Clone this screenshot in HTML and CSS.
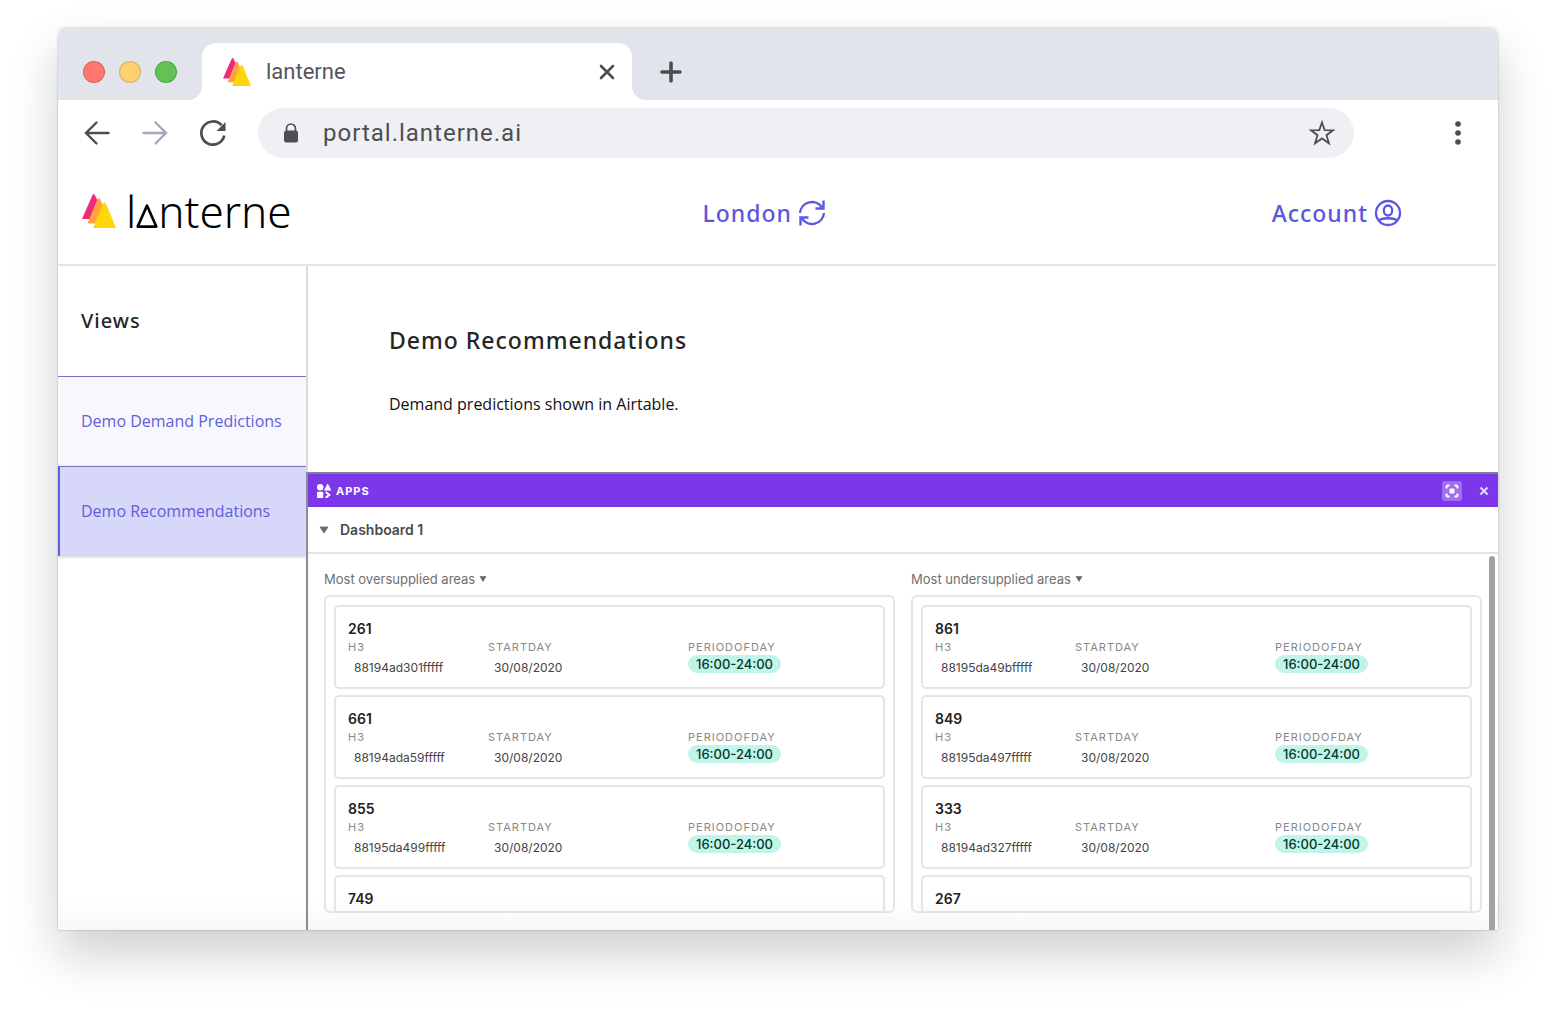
FILE: index.html
```
<!DOCTYPE html>
<html lang="en">
<head>
  <meta charset="utf-8">
  <title>lanterne</title>
  <link rel="stylesheet" href="styles.css">
</head>
<body>

  <div class="browser">
    <div class="tab-strip">
      <div class="window-controls">
        <button class="dot red" aria-label="Close window"></button>
        <button class="dot yellow" aria-label="Minimise window"></button>
        <button class="dot green" aria-label="Maximise window"></button>
      </div>
      <div class="tab-holder">
        <div class="tab">
          <svg class="favicon" viewBox="0 0 34 34">
            <path d="M0 25 10.500 1Q11.500-.8 12.800 1L17 10 10 25Z" fill="#ec297b"/>
            <path d="M5.500 29.500 15.500 5Q16.600 3.500 18 5L21 12 15 29.500Z" fill="#ffa340"/>
            <path d="M11 34 21 9.500Q22.500 7.500 24 9.500L34 34Z" fill="#ffd60a"/>
          </svg>
          <span class="tab-title">lanterne</span>
          <button class="icon-button" aria-label="Close tab">
            <svg width="16" height="16" viewBox="0 0 16 16"><path d="M2 2 14 14M14 2 2 14" fill="none" stroke="#4d4e53" stroke-width="2.600" stroke-linecap="round"/></svg>
          </button>
        </div>
      </div>
      <div class="strip-rest">
        <button class="icon-button" aria-label="New tab">
          <svg width="22" height="22" viewBox="0 0 22 22"><path d="M11 2V20M2 11H20" fill="none" stroke="#4d4e53" stroke-width="3.600" stroke-linecap="round"/></svg>
        </button>
      </div>
    </div>

    <div class="toolbar">
      <button class="icon-button" aria-label="Back">
        <svg width="26" height="26" viewBox="0 0 26 26"><path d="M24.500 13H2M12.500 2.500 2 13 12.500 23.500" fill="none" stroke="#4d4e53" stroke-width="2.400" stroke-linecap="round"/></svg>
      </button>
      <button class="icon-button" aria-label="Forward">
        <svg width="26" height="26" viewBox="0 0 26 26"><path d="M1.500 13H24M13.500 2.500 24 13 13.500 23.500" fill="none" stroke="#a5a8b5" stroke-width="2.400" stroke-linecap="round"/></svg>
      </button>
      <button class="icon-button" aria-label="Reload">
        <svg width="26" height="26" viewBox="0 0 26 26"><path d="M24.300 15.500A11.600 11.600 0 1 1 21.500 5.200" fill="none" stroke="#4d4e53" stroke-width="2.700"/><path d="M25.500 2V11H16.500Z" fill="#4d4e53"/></svg>
      </button>
      <div class="address-bar">
        <svg width="16" height="20" viewBox="0 0 16 20"><path d="M3.500 9V5.500A4.500 4.500 0 0 1 12.500 5.500V9" fill="none" stroke="#4d4e53" stroke-width="1.700"/><rect x="1" y="7.500" width="14" height="12" rx="2.500" fill="#4d4e53"/></svg>
        <input type="text" class="address" aria-label="Address" value="portal.lanterne.ai">
        <button class="icon-button" aria-label="Bookmark">
          <svg width="26" height="26" viewBox="0 0 26 26"><path d="M13 2.500 15.700 10.100 24 10.300 17.500 15.200 19.900 23.200 13 18.400 6.100 23.200 8.500 15.200 2 10.300 10.300 10.100Z" fill="none" stroke="#4d4e53" stroke-width="1.800"/></svg>
        </button>
      </div>
      <button class="icon-button more" aria-label="Menu">
        <svg width="6" height="24" viewBox="0 0 6 24" fill="#4d4e53"><circle cx="3" cy="3" r="2.800"/><circle cx="3" cy="12" r="2.800"/><circle cx="3" cy="21" r="2.800"/></svg>
      </button>
    </div>

    <header class="site-header">
      <a class="logo" href="#">
        <svg class="logo-mark" viewBox="0 0 34 34">
          <path d="M0 25 10.500 1Q11.500-.8 12.800 1L17 10 10 25Z" fill="#ec297b"/>
          <path d="M5.500 29.500 15.500 5Q16.600 3.500 18 5L21 12 15 29.500Z" fill="#ffa340"/>
          <path d="M11 34 21 9.500Q22.500 7.500 24 9.500L34 34Z" fill="#ffd60a"/>
        </svg>
        <span class="logo-text">l<svg class="logo-a" viewBox="0 0 20 22"><path d="M1.500 20.700 10 1.500 18.500 20.700Z" fill="none" stroke="#000" stroke-width="2.400" stroke-linejoin="round"/></svg>nterne</span>
      </a>
      <a class="header-link" href="#">London
        <svg width="28" height="28" viewBox="0 0 28 28" fill="none" stroke="#5b57e0" stroke-width="2.400"><path d="M2 14A12 12 0 0 1 24 8.500M26 14A12 12 0 0 1 4 19.500"/><path d="M25.500 1.500V9.500H17.500M2.500 26.500V18.500H10.500"/></svg>
      </a>
      <a class="header-link" href="#">Account
        <svg width="28" height="28" viewBox="0 0 28 28" fill="none" stroke="#5b57e0" stroke-width="2.300"><circle cx="14" cy="14" r="12"/><ellipse cx="14" cy="11.500" rx="4.200" ry="5"/><path d="M5 21.500C8 18.500 20 18.500 23 21.500"/></svg>
      </a>
    </header>

    <div class="page">
      <nav class="sidebar">
        <h2>Views</h2>
        <a href="#">Demo Demand Predictions</a>
        <a href="#" class="active">Demo Recommendations</a>
      </nav>

      <main class="content">
        <div class="intro">
          <h1>Demo Recommendations</h1>
          <p>Demand predictions shown in Airtable.</p>
        </div>

        <section class="airtable">
          <div class="apps-bar">
            <svg width="14" height="14" viewBox="0 0 14 14" fill="#fff"><circle cx="3.200" cy="3.200" r="3.200"/><path d="M10.700 0 14 6.200H7.400Z" stroke="#fff" stroke-width=".6"/><rect y="7.800" width="6.300" height="6.200" rx="1"/><path d="M8.700 8 12.300 10.900 8.700 13.700" fill="none" stroke="#fff" stroke-width="2"/></svg>
            <span class="apps-title">APPS</span>
            <button class="fullscreen" aria-label="Full screen">
              <svg width="14" height="14" viewBox="0 0 14 14"><path d="M1.500 4.500V3Q1.500 1.500 3 1.500H4.500M9.500 1.500H11Q12.500 1.500 12.500 3V4.500M12.500 9.500V11Q12.500 12.500 11 12.500H9.500M4.500 12.500H3Q1.500 12.500 1.500 11V9.500" fill="none" stroke="#fff" stroke-width="2"/><rect x="4.500" y="4.500" width="5" height="5" rx="1" fill="#fff"/></svg>
            </button>
            <button class="icon-button" aria-label="Close apps">
              <svg width="10" height="10" viewBox="0 0 10 10"><path d="M1.500 1.500 8.500 8.500M8.500 1.500 1.500 8.500" stroke="#e6dafc" stroke-width="2"/></svg>
            </button>
          </div>
          <button class="dashboard-name">
            <svg width="10" height="8" viewBox="0 0 10 8"><path d="M1 1H9L5 7Z" fill="#6b6b6b" stroke="#6b6b6b" stroke-width=".8"/></svg>
            Dashboard 1
          </button>

          <div class="dashboard">
            <div class="block">
              <button class="block-title">Most oversupplied areas
                <svg width="8" height="6" viewBox="0 0 8 6"><path d="M1 .5H7L4 5.500Z" fill="#666" stroke="#666" stroke-width=".6"/></svg>
              </button>
              <div class="record-list">
                <article class="record">
                  <h3>261</h3>
                  <dl>
                    <div><dt>H3</dt><dd>88194ad301fffff</dd></div>
                    <div><dt>STARTDAY</dt><dd>30/08/2020</dd></div>
                    <div><dt>PERIODOFDAY</dt><dd class="pill">16:00-24:00</dd></div>
                  </dl>
                </article>
                <article class="record">
                  <h3>661</h3>
                  <dl>
                    <div><dt>H3</dt><dd>88194ada59fffff</dd></div>
                    <div><dt>STARTDAY</dt><dd>30/08/2020</dd></div>
                    <div><dt>PERIODOFDAY</dt><dd class="pill">16:00-24:00</dd></div>
                  </dl>
                </article>
                <article class="record">
                  <h3>855</h3>
                  <dl>
                    <div><dt>H3</dt><dd>88195da499fffff</dd></div>
                    <div><dt>STARTDAY</dt><dd>30/08/2020</dd></div>
                    <div><dt>PERIODOFDAY</dt><dd class="pill">16:00-24:00</dd></div>
                  </dl>
                </article>
                <article class="record">
                  <h3>749</h3>
                </article>
              </div>
            </div>

            <div class="block">
              <button class="block-title">Most undersupplied areas
                <svg width="8" height="6" viewBox="0 0 8 6"><path d="M1 .5H7L4 5.500Z" fill="#666" stroke="#666" stroke-width=".6"/></svg>
              </button>
              <div class="record-list">
                <article class="record">
                  <h3>861</h3>
                  <dl>
                    <div><dt>H3</dt><dd>88195da49bfffff</dd></div>
                    <div><dt>STARTDAY</dt><dd>30/08/2020</dd></div>
                    <div><dt>PERIODOFDAY</dt><dd class="pill">16:00-24:00</dd></div>
                  </dl>
                </article>
                <article class="record">
                  <h3>849</h3>
                  <dl>
                    <div><dt>H3</dt><dd>88195da497fffff</dd></div>
                    <div><dt>STARTDAY</dt><dd>30/08/2020</dd></div>
                    <div><dt>PERIODOFDAY</dt><dd class="pill">16:00-24:00</dd></div>
                  </dl>
                </article>
                <article class="record">
                  <h3>333</h3>
                  <dl>
                    <div><dt>H3</dt><dd>88194ad327fffff</dd></div>
                    <div><dt>STARTDAY</dt><dd>30/08/2020</dd></div>
                    <div><dt>PERIODOFDAY</dt><dd class="pill">16:00-24:00</dd></div>
                  </dl>
                </article>
                <article class="record">
                  <h3>267</h3>
                </article>
              </div>
            </div>
            <div class="scrollbar"></div>
          </div>
        </section>
      </main>
    </div>
  </div>

</body>
</html>
```
FILE: styles.css
```
* {
  box-sizing: border-box;
}

body {
  margin: 0;
  height: 100vh;
  padding: 28px 58px 87px;
  background: #fff;
  font-family: "Noto Sans", sans-serif;
}

h1, h2, h3, p, dl, dd {
  margin: 0;
}

button {
  border: none;
  background: none;
  padding: 0;
  font: inherit;
  cursor: pointer;
}

a {
  text-decoration: none;
}

svg {
  display: block;
  flex: none;
}

.browser {
  height: 100%;
  display: flex;
  flex-direction: column;
  overflow: hidden;
  border-radius: 8px 8px 0 0;
  background: linear-gradient(to top, #f7f7f7, #fff 32px);
  box-shadow: 0 24px 50px rgba(10, 15, 20, 0.2), 0 0 2px rgba(0, 0, 0, 0.3);
}

/* tabs */
.tab-strip {
  display: flex;
  height: 72px;
  flex: none;
  background: #fff;
}

.window-controls {
  display: flex;
  align-items: center;
  gap: 14px;
  width: 144px;
  padding: 16px 0 0 25px;
  background: #e1e4eb;
  border-bottom-right-radius: 14px;
}

.dot {
  width: 22px;
  height: 22px;
  border-radius: 50%;
  border: 1px solid rgba(0, 0, 0, 0.15);
}

.red { background: #ff776d; }
.yellow { background: #ffd06f; }
.green { background: #62c254; }

.tab-holder {
  width: 430px;
  padding-top: 15px;
  background: linear-gradient(#e1e4eb 50%, #fff 50%);
}

.tab {
  display: flex;
  align-items: center;
  height: 57px;
  padding: 0 17px 0 21px;
  background: #fff;
  border-radius: 14px 14px 0 0;
}

.favicon {
  width: 28px;
  height: 28px;
}

.tab-title {
  flex: 1;
  margin-left: 15px;
  font-family: Roboto, sans-serif;
  font-size: 22px;
  color: #55565b;
}

.strip-rest {
  flex: 1;
  display: flex;
  align-items: center;
  padding: 16px 0 0 28px;
  background: #e1e4eb;
  border-bottom-left-radius: 14px;
}

/* address row */
.toolbar {
  display: flex;
  align-items: center;
  flex: none;
  gap: 32px;
  height: 65px;
  padding: 0 37px 0 26px;
}

.address-bar {
  flex: 1;
  display: flex;
  align-items: center;
  height: 50px;
  padding: 0 19px 0 25px;
  border-radius: 25px;
  background: #eff0f4;
}

.address {
  flex: 1;
  min-width: 0;
  margin-left: 24px;
  padding: 0;
  border: none;
  background: none;
  font-family: Roboto, sans-serif;
  font-size: 24px;
  letter-spacing: 1px;
  color: #4d4e53;
}

.more {
  margin-left: 69px;
}

/* site header */
.site-header {
  display: grid;
  grid-template-columns: 47% 1fr auto;
  align-items: center;
  flex: none;
  height: 101px;
  margin-right: 2px;
  padding: 0 94px 4px 24px;
  border-bottom: 2px solid #e3e3e3;
}

.logo {
  display: flex;
  align-items: center;
  gap: 10px;
  padding-bottom: 4px;
}

.logo-mark {
  width: 34px;
  height: 34px;
}

.logo-text {
  display: flex;
  align-items: center;
  font-weight: 300;
  font-size: 44px;
  line-height: 44px;
  color: #000;
}

.logo-a {
  width: 22px;
  height: 24px;
  margin-top: 10px;
}

.header-link {
  display: flex;
  align-items: center;
  gap: 6px;
  font-size: 23px;
  font-weight: 500;
  letter-spacing: 1px;
  color: #5b57e0;
}

/* page */
.page {
  flex: 1;
  display: flex;
  min-height: 0;
}

.sidebar {
  width: 248px;
  flex: none;
  color: #262626;
}

.sidebar h2 {
  height: 110px;
  padding-left: 23px;
  font-size: 20px;
  font-weight: 500;
  letter-spacing: 1px;
  line-height: 110px;
}

.sidebar a {
  display: block;
  height: 90px;
  padding-left: 23px;
  border-top: 1px solid #7471c6;
  font-family: "Open Sans", sans-serif;
  font-size: 16px;
  line-height: 89px;
  color: #625edb;
  background: #f7f8fd;
  white-space: nowrap;
}

.sidebar a.active {
  padding-left: 21px;
  border-left: 2px solid #5f5ce6;
  background: #d7d7fa;
  box-shadow: 0 1px 3px rgba(0, 0, 0, 0.2);
}

.content {
  flex: 1;
  display: flex;
  flex-direction: column;
  min-width: 0;
}

.intro {
  height: 206px;
  padding: 57px 84px 0 81px;
  border-left: 2px solid #dadada;
}

.intro h1 {
  font-size: 23px;
  font-weight: 500;
  letter-spacing: 1px;
  line-height: 34px;
  color: #262626;
}

.intro p {
  margin-top: 35px;
  font-family: "Open Sans", sans-serif;
  font-size: 16px;
  line-height: 24px;
  color: #111;
}

.airtable {
  flex: 1;
  display: flex;
  flex-direction: column;
  min-height: 0;
  border-top: 2px solid #85808f;
  border-left: 2px solid #8c8c8c;
  font-family: Inter, sans-serif;
}

.apps-bar {
  display: flex;
  align-items: center;
  flex: none;
  height: 33px;
  padding: 0 9px;
  background: #7c37eb;
}

.apps-title {
  flex: 1;
  margin-left: 5px;
  font-size: 11px;
  font-weight: 700;
  letter-spacing: 1px;
  color: #fff;
}

.fullscreen {
  display: grid;
  place-items: center;
  width: 20px;
  height: 20px;
  margin-right: 17px;
  border-radius: 3px;
  background: #a06ff1;
}

.dashboard-name {
  display: flex;
  align-items: center;
  flex: none;
  gap: 11px;
  height: 47px;
  padding: 0 11px;
  border-bottom: 2px solid #e3e3e3;
  font-size: 14px;
  font-weight: 600;
  color: #4a4a4a;
}

.dashboard {
  flex: 1;
  display: flex;
  gap: 16px;
  min-height: 0;
  padding: 2px 3px 0 16px;
}

.block {
  flex: 1;
  display: flex;
  flex-direction: column;
  min-width: 0;
  padding: 13px 0 17px;
}

.block-title {
  display: flex;
  align-items: center;
  flex: none;
  gap: 4px;
  height: 20px;
  margin-bottom: 6px;
  font-size: 13px;
  color: #707070;
}

.record-list {
  flex: 1;
  min-height: 0;
  overflow: hidden;
  padding: 8px 8px 0;
  border: 2px solid #e5e5e5;
  border-radius: 6px;
}

.record {
  height: 84px;
  margin-bottom: 6px;
  padding: 12px;
  border: 2px solid #e5e5e5;
  border-radius: 5px;
}

.record h3 {
  font-size: 14px;
  font-weight: 600;
  line-height: 20px;
  color: #222;
}

.record dl {
  display: grid;
  grid-template-columns: 140px 200px 1fr;
}

.record dt {
  font-size: 11px;
  letter-spacing: 1px;
  line-height: 16px;
  color: #888;
}

.record dd {
  padding-left: 6px;
  font-size: 12px;
  line-height: 26px;
  color: #444;
}

.record .pill {
  width: max-content;
  padding: 0 8px;
  border-radius: 9px;
  background: #c2f5e9;
  font-size: 13px;
  font-weight: 500;
  line-height: 18px;
  color: #06372a;
}

.scrollbar {
  width: 6px;
  margin-left: -9px;
  border-radius: 3px 3px 0 0;
  background: #a3a3a3;
}
```
